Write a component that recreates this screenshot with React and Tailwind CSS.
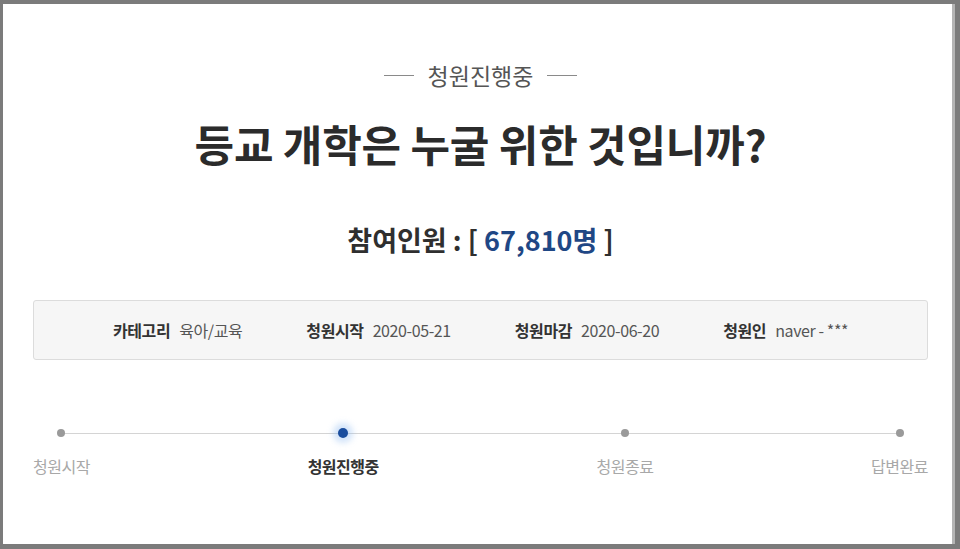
import React from 'react';

const info = [
  { label: '카테고리', value: '육아/교육' },
  { label: '청원시작', value: '2020-05-21' },
  { label: '청원마감', value: '2020-06-20' },
  { label: '청원인', value: 'naver - ***' },
];

const steps = [
  { name: '청원시작', active: false },
  { name: '청원진행중', active: true },
  { name: '청원종료', active: false },
  { name: '답변완료', active: false },
];

function App() {
  return (
    <div
      className="h-[549px] w-[960px] bg-[#7b7b7b] pl-[3px] pt-[4px] pr-[5px] pb-[5px]"
      style={{ fontFamily: '"Noto Sans CJK KR", "Noto Sans", sans-serif' }}
    >
      <div className="flex h-full flex-col border-r-[3px] border-[#b4b4b4] bg-white pl-[30px] pr-[24px]">
        <div className="mt-[57px] flex items-center justify-center gap-[14px] text-[23px] leading-[28px] text-[#555]">
          <span className="h-px w-[30px] bg-[#8a8a8a]" />
          <span>청원진행중</span>
          <span className="h-px w-[30px] bg-[#8a8a8a]" />
        </div>

        <h1 className="mt-[26px] text-center text-[43px] font-bold leading-[56px] tracking-[-0.2px] text-[#2b2b2b]">
          등교 개학은 누굴 위한 것입니까?
        </h1>

        <div className="mt-[51px] text-center text-[27px] font-bold leading-[36px] text-[#2f2f2f]">
          참여인원 : [ <span className="text-[#1f4785]">67,810명</span> ]
        </div>

        <div className="mt-[42px] flex h-[60px] items-center justify-center gap-[64px] rounded-[3px] border border-[#dcdcdc] bg-[#f6f6f6] text-[16px] tracking-[-0.4px]">
          {info.map((item) => (
            <div key={item.label} className="flex items-center gap-[9px]">
              <span className="font-bold text-[#333]">{item.label}</span>
              <span className="text-[#555]">{item.value}</span>
            </div>
          ))}
        </div>

        <div className="relative mt-[65px] flex justify-between">
          <div className="absolute left-[29px] right-[30px] top-[8px] h-px bg-[#d4d4d4]" />
          {steps.map((step) => (
            <div key={step.name} className="relative flex flex-col items-center">
              <div className="flex h-[16px] w-[16px] items-center justify-center">
                {step.active ? (
                  <span className="h-[10px] w-[10px] rounded-full bg-[#1a4d9e] shadow-[0_0_6px_5px_rgba(140,185,240,0.4)]" />
                ) : (
                  <span className="h-[8px] w-[8px] rounded-full bg-[#9a9a9a]" />
                )}
              </div>
              <span
                className={
                  step.active
                    ? 'mt-[15px] text-[16px] font-bold leading-[20px] tracking-[-0.5px] text-[#333]'
                    : 'mt-[15px] text-[16px] leading-[20px] tracking-[-0.5px] text-[#a8a8a8]'
                }
              >
                {step.name}
              </span>
            </div>
          ))}
        </div>
      </div>
    </div>
  );
}

export default App;
